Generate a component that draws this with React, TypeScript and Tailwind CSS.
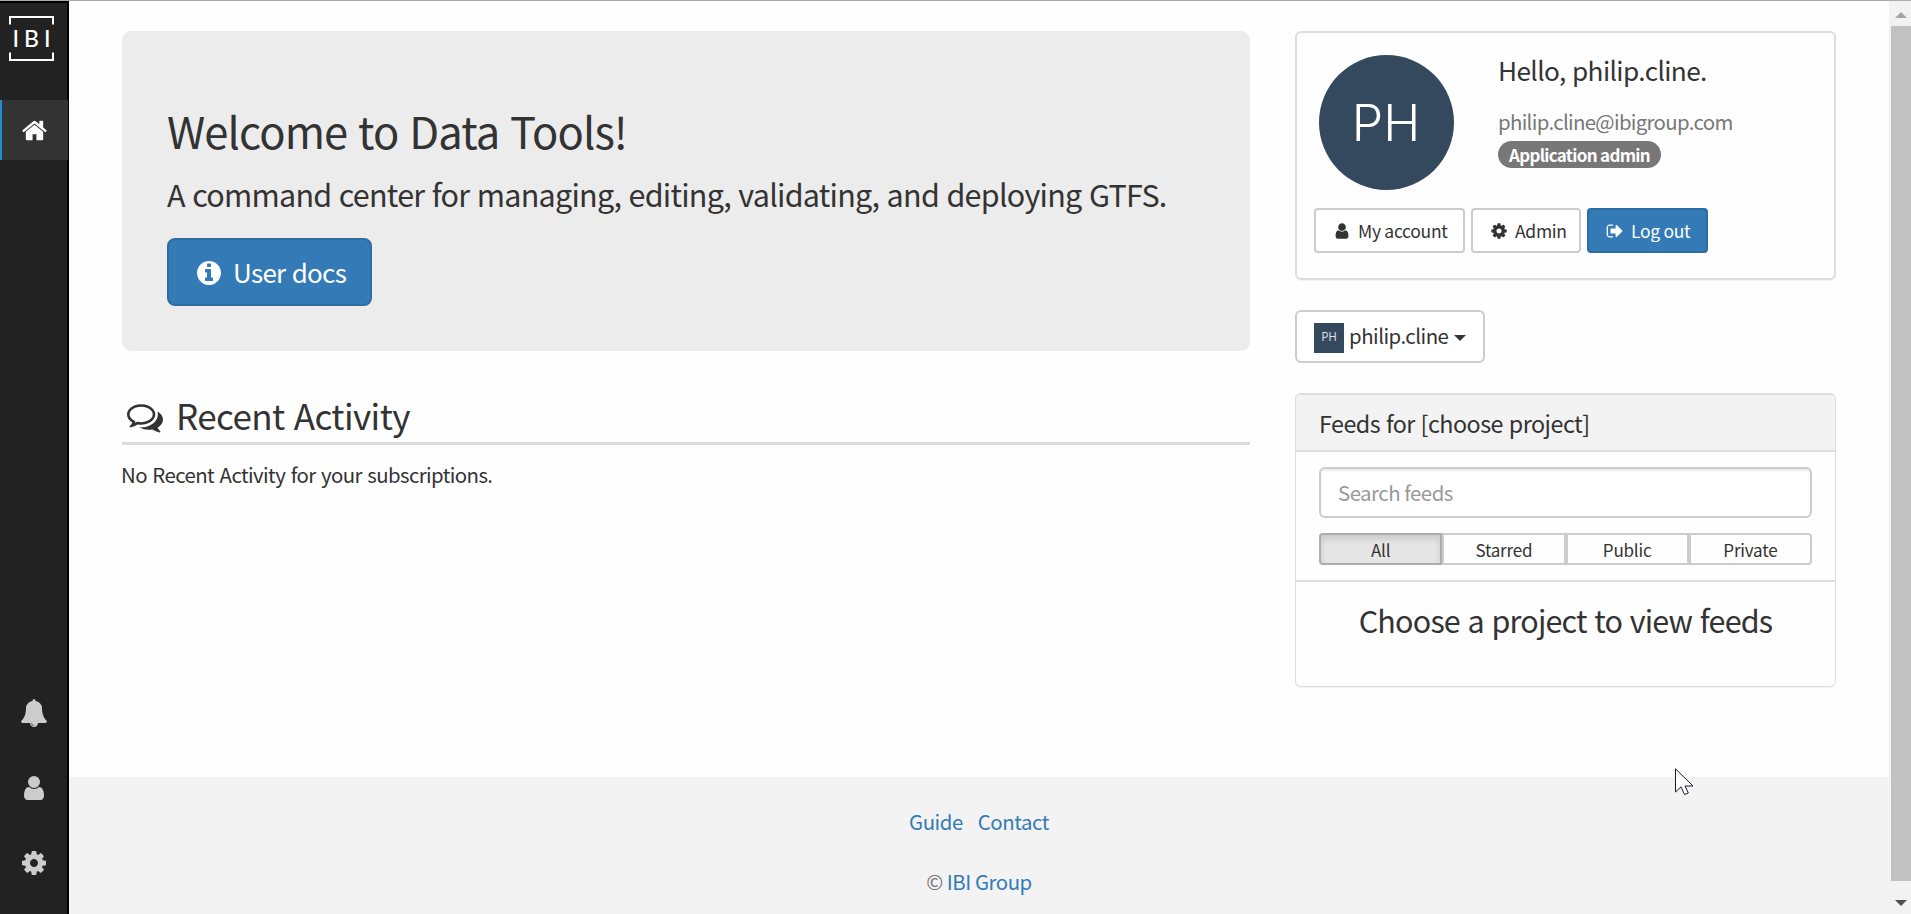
import type { ReactNode } from "react";

const paths = {
  home: "M1472 992v480q0 26-19 45t-45 19h-384v-384h-256v384h-384q-26 0-45-19t-19-45v-480q0-1 .5-3t.5-3l575-474 575 474q1 2 1 6zm223-69l-62 74q-8 9-21 11h-3q-13 0-21-7l-692-577-692 577q-12 8-24 7-13-2-21-11l-62-74q-8-10-7-23.5t11-21.5l719-599q32-26 76-26t76 26l244 204v-195q0-14 9-23t23-9h192q14 0 23 9t9 23v408l219 182q10 8 11 21.5t-7 23.5z",
  bell: "M912 1696q0-16-16-16-59 0-101.5-42.5t-42.5-101.5q0-16-16-16t-16 16q0 73 51.5 124.5t124.5 51.5q16 0 16-16zm816-288q0 52-38 90t-90 38h-448q0 106-75 181t-181 75-181-75-75-181h-448q-52 0-90-38t-38-90q50-42 91-88t85-119.5 74.5-158.5 50-206 19.5-260q0-152 117-282.5t307-158.5q-8-19-8-39 0-40 28-68t68-28 68 28 28 68q0 20-8 39 190 28 307 158.5t117 282.5q0 139 19.5 260t50 206 74.5 158.5 85 119.5 91 88z",
  user: "M1536 1399q0 109-62.5 187t-150.5 78h-854q-88 0-150.5-78t-62.5-187q0-85 8.5-160.5t31.5-152 58.5-131 94-89 134.5-34.5q131 128 313 128t313-128q76 0 134.5 34.5t94 89 58.5 131 31.5 152 8.5 160.5zm-256-887q0 159-112.5 271.5t-271.5 112.5-271.5-112.5-112.5-271.5 112.5-271.5 271.5-112.5 271.5 112.5 112.5 271.5z",
  cog: "M1152 896q0-106-75-181t-181-75-181 75-75 181 75 181 181 75 181-75 75-181zm512-109v222q0 12-8 23t-20 13l-185 28q-19 54-39 91 35 50 107 138 10 12 10 25t-9 23q-27 37-99 108t-94 71q-12 0-26-9l-138-108q-44 23-91 38-16 136-29 186-7 28-36 28h-222q-14 0-24.5-8.5t-11.5-21.5l-28-184q-49-16-90-37l-141 107q-10 9-25 9-14 0-25-11-126-114-165-168-7-10-7-23 0-12 8-23 15-21 51-66.5t54-70.5q-27-50-41-99l-183-27q-13-2-21-12.5t-8-23.5v-222q0-12 8-23t19-13l186-28q14-46 39-92-40-57-107-138-10-12-10-24 0-10 9-23 26-36 98.5-107.5t94.5-71.5q13 0 26 10l138 107q44-23 91-38 16-136 29-186 7-28 36-28h222q14 0 24.5 8.5t11.5 21.5l28 184q49 16 90 37l142-107q9-9 24-9 13 0 25 10 129 119 165 170 7 8 7 22 0 12-8 23-15 21-51 66.5t-54 70.5q26 50 41 98l183 28q13 2 21 12.5t8 23.5z",
  info: "M1152 1376v-160q0-14-9-23t-23-9h-96v-512q0-14-9-23t-23-9h-320q-14 0-23 9t-9 23v160q0 14 9 23t23 9h96v320h-96q-14 0-23 9t-9 23v160q0 14 9 23t23 9h448q14 0 23-9t9-23zm-128-896v-160q0-14-9-23t-23-9h-192q-14 0-23 9t-9 23v160q0 14 9 23t23 9h192q14 0 23-9t9-23zm640 416q0 209-103 385.5t-279.5 279.5-385.5 103-385.5-103-279.5-279.5-103-385.5 103-385.5 279.5-279.5 385.5-103 385.5 103 279.5 279.5 103 385.5z",
  comments: "M704 384q-153 0-286 52t-211.5 141-78.5 191q0 82 53 158t149 132l97 56-35 84q34-20 62-39l44-31 53 10q78 14 153 14 153 0 286-52t211.5-141 78.5-191-78.5-191-211.5-141-286-52zm0-128q191 0 353.5 68.5t256.5 186.5 94 257-94 257-256.5 186.5-353.5 68.5q-86 0-176-16-124 88-278 128-36 9-86 16h-3q-11 0-20.5-8t-11.5-21q-1-3-1-6.5t.5-6.5 2-6l2.5-5 3.5-5.5 4-5 4.5-5 4-4.5q5-6 23-25t26-29.5 22.5-29 25-38.5 20.5-44q-124-72-195-177t-71-224q0-139 94-257t256.5-186.5 353.5-68.5zm822 1169q10 24 20.5 44t25 38.5 22.5 29 26 29.5 23 25q1 1 4 4.5t4.5 5 4 5 3.5 5.5l2.5 5 2 6 .5 6.5-1 6.5q-3 14-13 22t-22 7q-50-7-86-16-154-40-278-128-90 16-176 16-271 0-472-132 58 4 88 4 161 0 309-45t264-129q125-92 192-212t67-254q0-77-23-152 129 71 204 178t75 230q0 120-71 224.5t-195 176.5z",
  signOut: "M704 1440q0 4 1 20t.5 26.5-3 23.5-10 19.5-20.5 6.5h-320q-119 0-203.5-84.5t-84.5-203.5v-704q0-119 84.5-203.5t203.5-84.5h320q13 0 22.5 9.5t9.5 22.5q0 4 1 20t.5 26.5-3 23.5-10 19.5-20.5 6.5h-320q-66 0-113 47t-47 113v704q0 66 47 113t113 47h312l11.5 1 11.5 3 8 5.5 7 9 2 13.5zm928-544q0 26-19 45l-544 544q-19 19-45 19t-45-19-19-45v-288h-448q-26 0-45-19t-19-45v-384q0-26 19-45t45-19h448v-288q0-26 19-45t45-19 45 19l544 544q19 19 19 45z",
};

function Icon({ name, className }: { name: keyof typeof paths; className: string }) {
  return (
    <svg viewBox="0 0 1792 1792" fill="currentColor" className={`shrink-0 ${className}`} aria-hidden="true">
      <path d={paths[name]} />
    </svg>
  );
}

function Sidebar() {
  return (
    <nav className="flex w-[69px] shrink-0 flex-col border-r-2 border-t-2 border-black bg-[#222] text-[#ccc]">
      <div className="flex h-[97px] pl-[9px] pt-[13px]">
        <div className="relative flex h-[45px] w-[45px] items-center justify-center text-white">
          <svg viewBox="0 0 45 45" className="absolute inset-0" fill="none" stroke="white" strokeWidth="2">
            <path d="M1 8.500V1H44V8.500M1 36.500V44H44V36.500" />
          </svg>
          <span className="pl-[5px] font-['Lato'] text-[23px] font-medium leading-none tracking-[5px]">IBI</span>
        </div>
      </div>
      <a className="mr-[-1px] flex h-[60px] items-center border-l-2 border-[#1f8dd6] bg-[#333] pl-[19px] pt-px text-white">
        <Icon name="home" className="h-[27px] w-[27px]" />
      </a>
      <div className="mt-auto flex flex-col items-center pb-[14px] pl-px">
        <a className="flex h-[75px] items-center"><Icon name="bell" className="h-[28px] w-[28px]" /></a>
        <a className="flex h-[75px] items-center"><Icon name="user" className="h-[28px] w-[28px]" /></a>
        <a className="flex h-[75px] items-center"><Icon name="cog" className="h-[28px] w-[28px]" /></a>
      </div>
    </nav>
  );
}

function Welcome() {
  return (
    <section className="flex h-[320px] flex-col items-start rounded-[9px] bg-[#ececec] pl-[45px] pt-[75px]">
      <h2 className="h-[50px] text-[43.500px] leading-[50px] tracking-[-0.9px] [word-spacing:2px]">Welcome to Data Tools!</h2>
      <p className="mt-4 text-[30.500px] leading-[44px] tracking-[-0.75px] [word-spacing:1.300px]">
        A command center for managing, editing, validating, and deploying GTFS.
      </p>
      <a className="mt-[22px] flex h-[68px] w-[205px] items-center rounded-[8px] border-2 border-[#2e6da4] bg-[#337ab7] pl-[26px] text-[26px] tracking-[-0.7px] text-white [word-spacing:1px]">
        <Icon name="info" className="mr-[10px] mt-[2px] h-[28px] w-[28px]" />
        <span className="pb-[2px]">User docs</span>
      </a>
    </section>
  );
}

function RecentActivity() {
  return (
    <section className="mt-[43px]">
      <h3 className="flex h-[51px] items-start border-b-[3px] border-[#dcdcdc] text-[35px] leading-[42px] tracking-[-0.6px] [word-spacing:2px]">
        <Icon name="comments" className="ml-[5px] mr-[13px] mt-[5px] h-[36px] w-[36px]" />
        Recent Activity
      </h3>
      <p className="-ml-px mt-[14px] text-[20.400px] leading-[30px] tracking-[-0.6px] [word-spacing:1.500px]">No Recent Activity for your subscriptions.</p>
    </section>
  );
}

function SmallButton({ icon, width, primary, children }: { icon: keyof typeof paths; width: string; primary?: boolean; children: ReactNode }) {
  return (
    <a className={`flex h-[45px] items-center rounded-[4px] border-2 pl-[17px] text-[17.500px] tracking-[-0.3px] ${width} ${primary ? "border-[#2e6da4] bg-[#337ab7] text-white" : "border-[#ccc] bg-white"}`}>
      <Icon name={icon} className="mr-[7px] h-[18px] w-[18px]" />
      <span className="pt-[2px]">{children}</span>
    </a>
  );
}

function UserCard() {
  return (
    <section className="h-[249px] rounded-[6px] border-2 border-[#ddd] pl-[17px] pt-[22px] shadow-[0_1px_1px_rgba(0,0,0,0.05)]">
      <div className="flex pl-[5px]">
        <div className="flex h-[135px] w-[135px] items-center justify-center rounded-full bg-[#34495e] pr-px font-['Inter'] text-[50px] font-light leading-none text-white">
          PH
        </div>
        <div className="ml-[44px] flex flex-col items-start">
          <h4 className="text-[26.200px] leading-[30px] tracking-[-0.6px] [word-spacing:1px]">Hello, philip.cline.</h4>
          <p className="mt-[21px] text-[20.400px] leading-[30px] tracking-[-0.67px] text-[#777]">philip.cline@ibigroup.com</p>
          <span className="mt-[5px] flex h-[27px] w-[163px] items-center justify-center rounded-[14px] bg-[#777] pt-px text-[17px] font-bold tracking-[-0.7px] text-white">
            Application admin
          </span>
        </div>
      </div>
      <div className="mt-[18px] flex gap-[6px]">
        <SmallButton icon="user" width="w-[151px]">My account</SmallButton>
        <SmallButton icon="cog" width="w-[110px]">Admin</SmallButton>
        <SmallButton icon="signOut" width="w-[121px]" primary>Log out</SmallButton>
      </div>
    </section>
  );
}

const filters = ["All", "Starred", "Public", "Private"];

function FeedsPanel() {
  return (
    <section className="mt-[30px] h-[294px] overflow-hidden rounded-[6px] border border-t-2 border-[#ddd] shadow-[0_1px_1px_rgba(0,0,0,0.05)]">
      <h4 className="flex h-[57px] items-center border-b-2 border-[#ddd] bg-[#f3f3f3] pl-[23px] pt-[2px] text-[23.300px] tracking-[-0.5px] [word-spacing:1px]">
        Feeds for [choose project]
      </h4>
      <div className="h-[130px] border-b-2 border-[#ddd] px-[23px] pt-[15px]">
        <input
          placeholder="Search feeds"
          className="block h-[51px] w-full rounded-[6px] border-2 border-[#ccc] bg-white px-[17px] pb-[2px] text-[20.400px] tracking-[-0.5px] shadow-[inset_0_2px_2px_rgba(0,0,0,0.075)] placeholder:text-[#999]"
        />
        <div className="mt-[15px] grid h-[32px] grid-cols-4 text-[17px] tracking-[-0.2px]">
          {filters.map((label, i) => (
            <button
              key={label}
              className={`border-2 pt-[2px] first:rounded-l-[4px] last:rounded-r-[4px] ${i === 0 ? "border-[#adadad] bg-[#e6e6e6] shadow-[inset_0_4px_7px_rgba(0,0,0,0.125)]" : "border-[#ccc]"} flex items-center justify-center`}
            >
              {label}
            </button>
          ))}
        </div>
      </div>
      <p className="mt-[18px] text-center text-[30.500px] leading-[40px] tracking-[-0.8px] [word-spacing:1.500px]">Choose a project to view feeds</p>
    </section>
  );
}

function Footer() {
  return (
    <footer className="h-[137px] bg-[#f3f3f3] pt-[29px] text-center text-[20.400px] leading-[30px] tracking-[-0.45px] text-[#777]">
      <div className="flex justify-center gap-[15px] text-[#337ab7]">
        <a>Guide</a>
        <a>Contact</a>
      </div>
      <p className="mt-[30px]">© <a className="text-[#337ab7]">IBI Group</a></p>
    </footer>
  );
}

function Scrollbar() {
  return (
    <div className="flex w-[22px] shrink-0 flex-col items-end bg-[#f2f2f2]">
      <div className="flex h-[25px] w-5 items-center justify-center pt-[2px]">
        <svg width="12" height="6" viewBox="0 0 12 6" fill="#a3a3a3"><path d="M6 0L12 6H0Z" /></svg>
      </div>
      <div className="w-5 flex-1 bg-[#c1c1c1]" />
      <div className="flex h-[33px] w-5 items-center justify-center pt-[11px]">
        <svg width="12" height="6" viewBox="0 0 12 6" fill="#505050"><path d="M6 6L0 0H12Z" /></svg>
      </div>
    </div>
  );
}

export default function App() {
  return (
    <div className="relative flex h-[914px] w-[1911px] overflow-hidden border-t border-[#a9a9ad] bg-[#fefefe] font-['Noto_Sans_CJK_JP','Noto_Sans',sans-serif] text-[#333]">
      <Sidebar />
      <div className="flex min-w-0 flex-1 flex-col">
        <main className="flex h-[776px] pl-[53px] pt-[30px]">
          <div className="w-[1128px]">
            <Welcome />
            <RecentActivity />
          </div>
          <aside className="ml-[45px] w-[541px]">
            <UserCard />
            <a className="mt-[30px] flex h-[53px] w-[190px] items-center rounded-[6px] border-2 border-[#ccc] bg-white pl-[17px] text-[20.400px] tracking-[-0.5px]">
              <span className="mt-[2px] flex h-[30px] w-[30px] items-center justify-center bg-[#34495e] font-['Inter'] text-[11px] font-light tracking-normal text-white">PH</span>
              <span className="ml-[5px] pb-[2px]">philip.cline</span>
              <svg width="12" height="6" viewBox="0 0 12 6" fill="#333" className="ml-[6px] mt-[3px]"><path d="M6 6L0 0H12Z" /></svg>
            </a>
            <FeedsPanel />
          </aside>
        </main>
        <Footer />
      </div>
      <Scrollbar />
      <svg width="19" height="28" viewBox="0 0 19 28" className="absolute left-[1675px] top-[767px]" fill="white" stroke="#1a1a2a" strokeWidth="1">
        <path d="M.5 .8V24L6 18.800L9.500 26.500L13.300 25L10 18H18Z" />
      </svg>
    </div>
  );
}
